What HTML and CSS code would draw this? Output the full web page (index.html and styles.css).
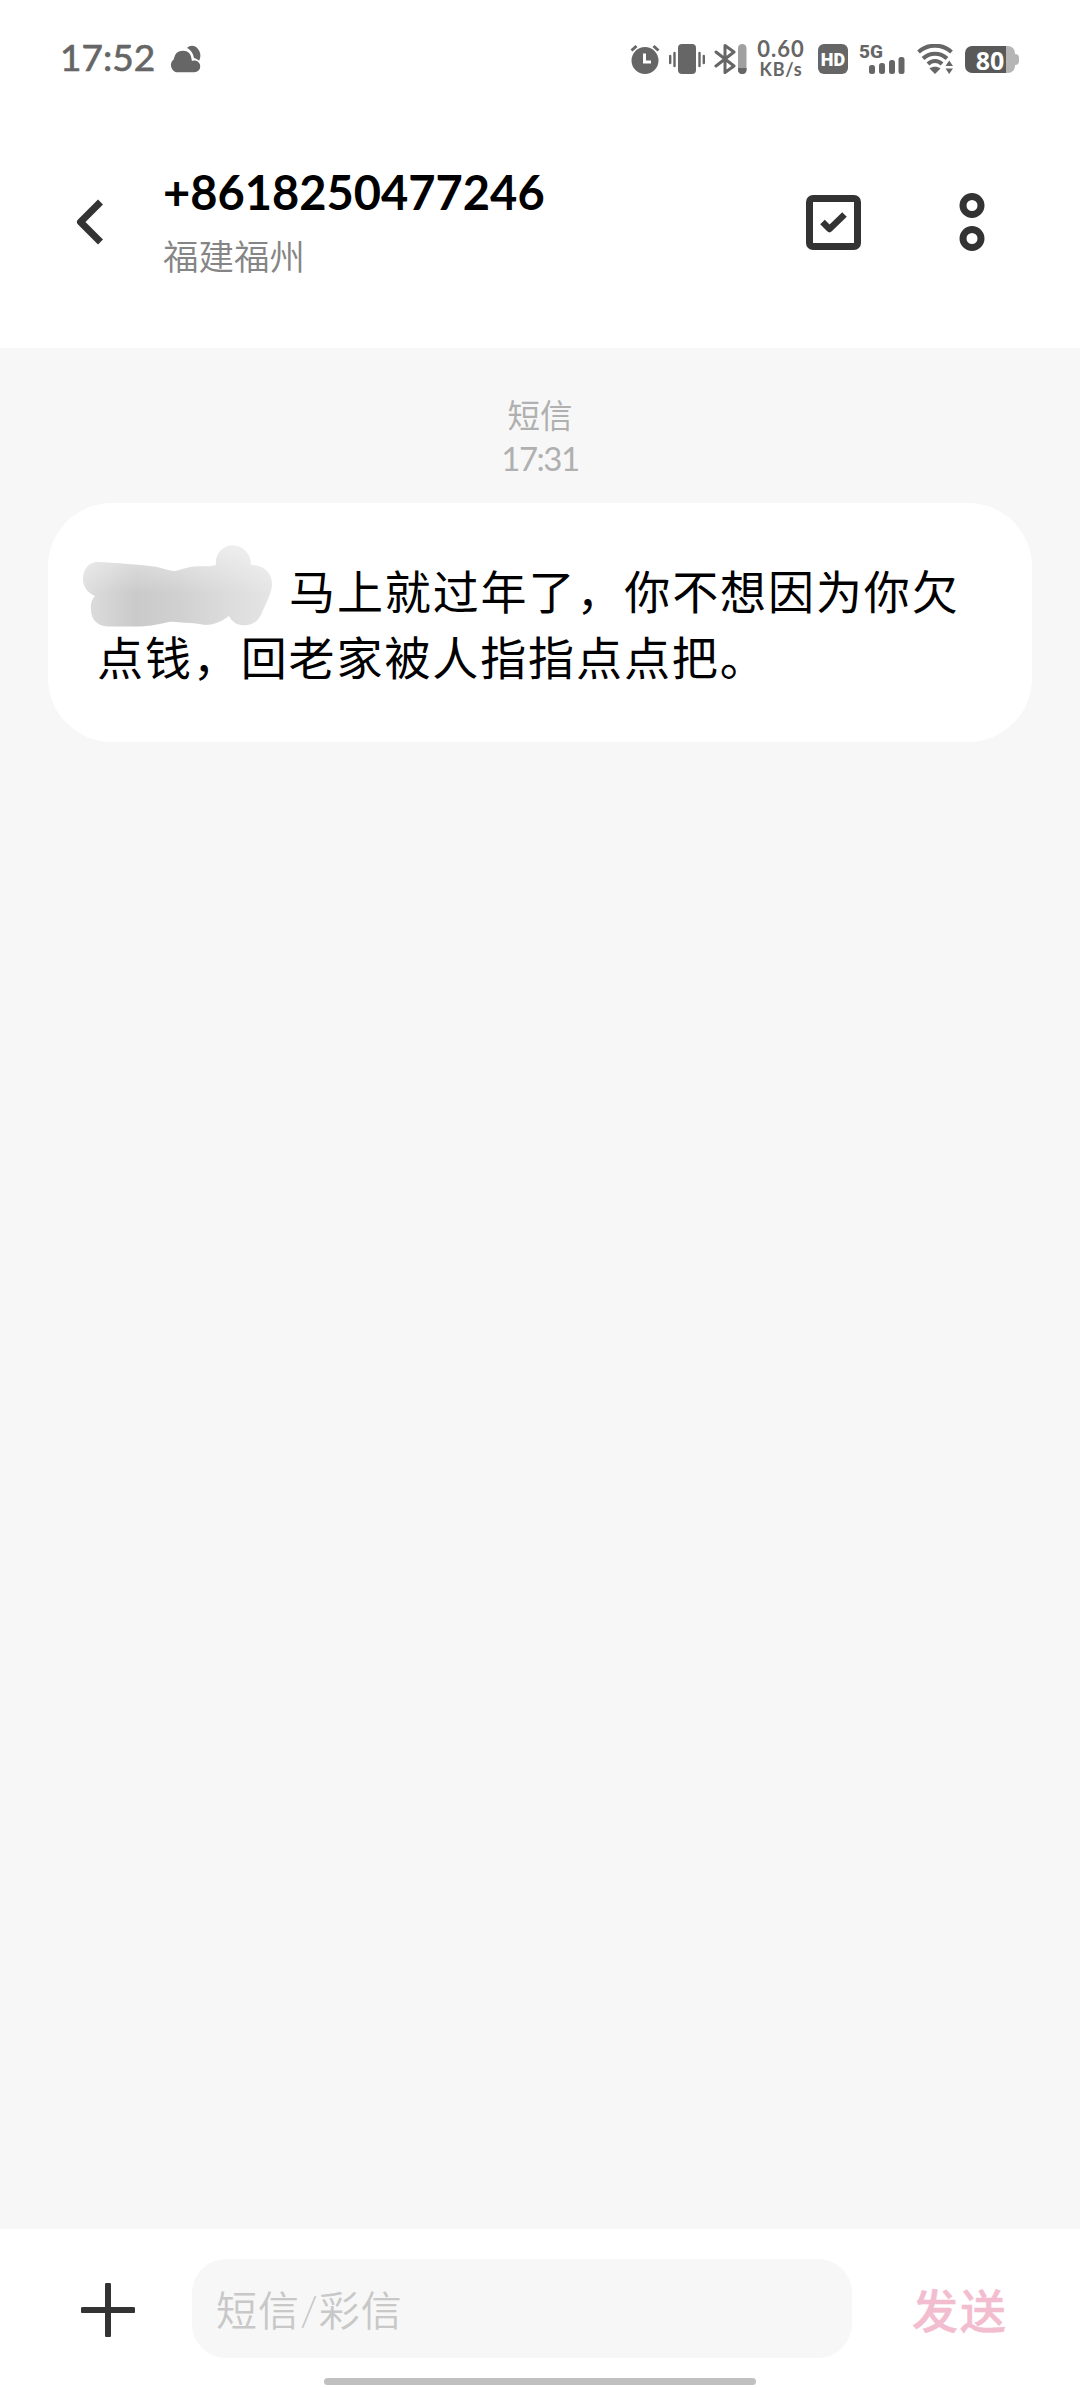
FILE: index.html
```html
<!DOCTYPE html>
<html lang="zh-CN">
<head>
    <meta charset="UTF-8">
    <meta name="viewport" content="width=device-width, initial-scale=1.0">
    <title>短信</title>
    <link rel="stylesheet" href="styles.css">
</head>
<body>
    <div class="phone">
        <!-- Status bar -->
        <div class="status-bar">
            <span class="clock">17:52</span>
            <svg class="weather" width="32" height="30" viewBox="0 0 32 30">
                <path d="M17 4C20 1 25 1 28 5C31 9 31 13 29 17C27 15 25 14 24 14C23 9 21 6 17 4Z"/>
                <path d="M9 29A8 8 0 0 1 3 15C4 9 8 6 13 6C19 6 22 10 22.500 16C27 15 31 18 31 22.500C31 26 28 29 24.500 29Z" stroke="#fff" stroke-width="1.500"/>
            </svg>

            <div class="status-icons">
                <svg class="alarm" width="30" height="30" viewBox="0 0 30 30">
                    <circle cx="15" cy="16.500" r="13.500"/>
                    <path d="M1.500 6.500L6.500 2M28.500 6.500L23.500 2" class="line" stroke-width="3"/>
                    <path d="M14.500 9.500V18H21" class="line white" stroke-width="3"/>
                </svg>
                <svg class="vibrate" width="36" height="30" viewBox="0 0 36 30">
                    <rect x="9" y="0" width="18" height="30" rx="4"/>
                    <path d="M1.200 12V19M5.500 9V22M30.500 9V22M34.800 12V19" class="line round" stroke-width="2.400"/>
                </svg>
                <svg class="bluetooth" width="33" height="30" viewBox="0 0 33 30">
                    <path d="M2 8L20 22L11 28.500V1.500L20 8L2 22" class="line round" stroke-width="3"/>
                    <rect x="24" y="0" width="8.500" height="30" rx="4.200" fill="#a0a0a0"/>
                    <path d="M24 24H32.500V26A4.200 4.200 0 0 1 24 26Z"/>
                </svg>
                <div class="speed">
                    <span class="speed-value">0.60</span>
                    <span class="speed-unit">KB/s</span>
                </div>
                <span class="hd">HD</span>
                <div class="signal">
                    <span class="network">5G</span>
                    <svg class="bars" width="36" height="18" viewBox="0 0 36 18">
                        <rect x="0" y="8" width="6" height="9" rx="2.500"/>
                        <rect x="10" y="6" width="6" height="11" rx="2.500"/>
                        <rect x="20" y="3" width="6" height="14" rx="2.500"/>
                        <rect x="29.500" y="0" width="6" height="17" rx="2.500"/>
                    </svg>
                </div>
                <svg class="wifi" width="37" height="30" viewBox="0 0 37 30">
                    <path d="M1.500 8C11 -0.500 25 -0.500 34.500 8M6 14.500C13 8 23 8 30 14.500M11 20C15 16 21 16 25 20" class="line" stroke-width="4"/>
                    <path d="M12.500 24.500C15.500 22 20.500 22 23.500 24.500L18 30Z"/>
                    <path d="M28.500 22L32.200 16.500L36 22ZM28.500 24.500L32.200 30L36 24.500Z"/>
                </svg>
                <div class="battery"><span class="battery-level">80</span></div>
            </div>
        </div>

        <!-- Header -->
        <div class="header">
            <svg class="back" width="28" height="48" viewBox="0 0 28 48">
                <path d="M24.500 4L4.500 24L24.500 44" class="dark-line" stroke-width="7"/>
            </svg>
            <div class="contact">
                <div class="number">+8618250477246</div>
                <div class="region">福建福州</div>
            </div>
            <svg class="select" width="55" height="55" viewBox="0 0 55 55">
                <rect x="3.500" y="3.500" width="48" height="48" rx="3.500" class="dark-line" stroke-width="7"/>
                <path d="M16.500 27L23.500 34L38.500 19.500" class="dark-line" stroke-width="6.500"/>
            </svg>
            <svg class="more" width="26" height="58" viewBox="0 0 26 58">
                <circle cx="13" cy="12.500" r="9" class="dark-line" stroke-width="7"/>
                <circle cx="13" cy="45.500" r="9" class="dark-line" stroke-width="7"/>
            </svg>
        </div>

        <!-- Messages -->
        <div class="messages">
            <div class="stamp">短信</div>
            <div class="stamp stamp-time">17:31</div>
            <div class="bubble">
                <span class="hidden-name">
                    <svg class="smear" width="190" height="83" viewBox="0 0 190 83">
                        <defs>
                            <linearGradient id="smear" x1="0" y1="0" x2="1" y2="0">
                                <stop offset="0" stop-color="#dedede"/>
                                <stop offset="0.280" stop-color="#cacaca"/>
                                <stop offset="0.500" stop-color="#d0d0d0"/>
                                <stop offset="0.720" stop-color="#dadada"/>
                                <stop offset="1" stop-color="#e5e5e5"/>
                            </linearGradient>
                            <linearGradient id="shine" x1="0" y1="0" x2="0" y2="1">
                                <stop offset="0" stop-color="#fff" stop-opacity="0.500"/>
                                <stop offset="0.600" stop-color="#fff" stop-opacity="0"/>
                            </linearGradient>
                            <path id="blob" d="M15 17C35 18 60 20 74 22C82 24 87 26 92 26C98 25 104 22 112 21.500C118 21 127 22 133 20C132 8 140 0.500 150 0.500C160 0.500 168 9 168 20C181 20 189 28 189 39C189 48 182 60 178 70C173 79 166 81 158 80C152 79 149 76 146 71C138 77 130 80 122 80C116 79 113 78 107 78C99 78 92 76 86 77C76 79 69 81 57 81.500H25C14 81 8 74 8 65C7 59 9 54 12 51C5 48 0 42 0 34C0 24 6 17 15 17Z"/>
                        </defs>
                        <use href="#blob" fill="url(#smear)"/>
                        <use href="#blob" fill="url(#shine)"/>
                    </svg>
                </span>马上就过年了，你不想因为你欠<br>点钱，回老家被人指指点点把。
            </div>
        </div>

        <!-- Input bar -->
        <div class="compose">
            <div class="compose-row">
                <svg class="add" width="54" height="54" viewBox="0 0 54 54">
                    <path d="M27 2V52M2 27H52" class="dark-line round" stroke-width="6"/>
                </svg>
                <div class="input">短信/彩信</div>
                <div class="send">发送</div>
            </div>
            <div class="home-bar"></div>
        </div>
    </div>
</body>
</html>
```
FILE: styles.css
```css
body {
    margin: 0;
    background-color: #fff;
    font-family: Lato, "Noto Sans CJK SC", sans-serif;
}

.phone {
    display: flex;
    flex-direction: column;
    width: 1080px;
    height: 2388px;
    overflow: hidden;
}

svg {
    display: block;
    flex-shrink: 0;
}

.line {
    fill: none;
    stroke: #666;
}

.dark-line {
    fill: none;
    stroke: #333;
    stroke-linejoin: round;
}

.round {
    stroke-linecap: round;
    stroke-linejoin: round;
}

.white {
    stroke: #fff;
}

/* Status bar */
.status-bar {
    display: flex;
    align-items: center;
    height: 96px;
    padding: 22px 61px 0 60px;
    box-sizing: border-box;
    color: #666;
    fill: #666;
}

.clock {
    width: 96px;
    font-size: 37px;
    line-height: 40px;
    margin-bottom: 5px;
    -webkit-text-stroke: 0.7px #666;
}

.weather {
    margin-left: 14px;
}

.status-icons {
    display: flex;
    align-items: center;
    margin-left: auto;
}

.vibrate {
    margin-left: 9px;
}

.bluetooth {
    margin-left: 9px;
}

.speed {
    display: flex;
    flex-direction: column;
    align-items: center;
    width: 52px;
    margin-left: 8px;
    margin-right: 1px;
    font-family: Lato, sans-serif;
    font-weight: 700;
    line-height: 19px;
}

.speed-value {
    height: 20px;
    font-size: 22px;
    line-height: 18px;
    letter-spacing: 1px;
}

.speed-unit {
    height: 19px;
    font-size: 18px;
    letter-spacing: 0.8px;
}

.hd {
    width: 30px;
    height: 30px;
    margin-left: 10px;
    border-radius: 6px;
    background-color: #666;
    color: #fff;
    font-family: Roboto, sans-serif;
    font-size: 18px;
    font-weight: 900;
    line-height: 31px;
    text-align: center;
}

.signal {
    width: 45px;
    height: 30px;
    margin-left: 11px;
}

.network {
    display: block;
    height: 13px;
    font-family: Roboto, sans-serif;
    font-size: 19px;
    font-weight: 800;
    line-height: 15px;
}

.bars {
    margin-left: 10px;
}

.wifi {
    margin-left: 13px;
}

.battery {
    position: relative;
    width: 50px;
    height: 27px;
    margin-left: 11px;
    margin-right: 4px;
    border-radius: 7px;
    background: linear-gradient(to right, #595959 41px, #b5b5b5 41px);
    color: #fff;
    font-family: "Noto Sans", sans-serif;
    font-size: 25px;
    font-weight: 700;
    line-height: 28px;
    text-align: center;
}

.battery::after {
    content: "";
    position: absolute;
    right: -4px;
    top: 8px;
    width: 4px;
    height: 11px;
    border-radius: 0 4px 4px 0;
    background-color: #b5b5b5;
}

/* Header */
.header {
    display: flex;
    align-items: center;
    height: 252px;
    padding: 0 95px 0 76px;
    box-sizing: border-box;
}

.contact {
    flex: 1;
    margin-left: 59px;
    padding-top: 5px;
}

.number {
    font-size: 47px;
    font-weight: 700;
    line-height: 64px;
    color: #000;
}

.region {
    font-size: 35.5px;
    font-weight: 350;
    line-height: 65px;
    color: #858585;
}

.more {
    margin-left: 98px;
}

/* Messages */
.messages {
    flex: 1;
    padding: 46px 48px 0;
    background-color: #f7f7f7;
}

.stamp {
    height: 43px;
    font-size: 32.5px;
    line-height: 43px;
    text-align: center;
    color: #b0b0b0;
}

.stamp-time {
    margin-bottom: 23px;
    font-size: 33px;
    letter-spacing: -1.5px;
}

.bubble {
    height: 239px;
    padding: 53px 49px;
    box-sizing: border-box;
    border-radius: 64px;
    background-color: #fff;
    font-family: "Noto Sans CJK SC", sans-serif;
    font-size: 46px;
    letter-spacing: 1.9px;
    line-height: 66px;
    white-space: nowrap;
    color: #000;
}

.hidden-name {
    position: relative;
    display: inline-block;
    width: 192px;
    height: 40px;
}

/* The smear lies over the name and runs past its box */
.smear {
    position: absolute;
    left: -14px;
    top: -24px;
}

/* Input bar */
.compose {
    height: 159px;
    background-color: #fff;
}

.compose-row {
    display: flex;
    align-items: center;
    padding: 30px 0 0 81px;
}

.add {
    margin-top: 2px;
}

.input {
    width: 660px;
    height: 99px;
    margin-left: 57px;
    padding: 2px 0 0 24px;
    box-sizing: border-box;
    border-radius: 34px;
    background-color: #f7f7f7;
    font-size: 41px;
    font-weight: 350;
    letter-spacing: 1px;
    line-height: 99px;
    color: #c8c8c8;
}

.send {
    margin-top: 4px;
    margin-left: 60px;
    font-size: 46px;
    font-weight: 500;
    letter-spacing: 2px;
    line-height: 60px;
    color: #f3bdd0;
    -webkit-text-stroke: 0.5px #f3bdd0;
}

.home-bar {
    width: 432px;
    height: 7px;
    margin: 20px auto 0;
    border-radius: 4px;
    background-color: #c0c0c0;
}
```
